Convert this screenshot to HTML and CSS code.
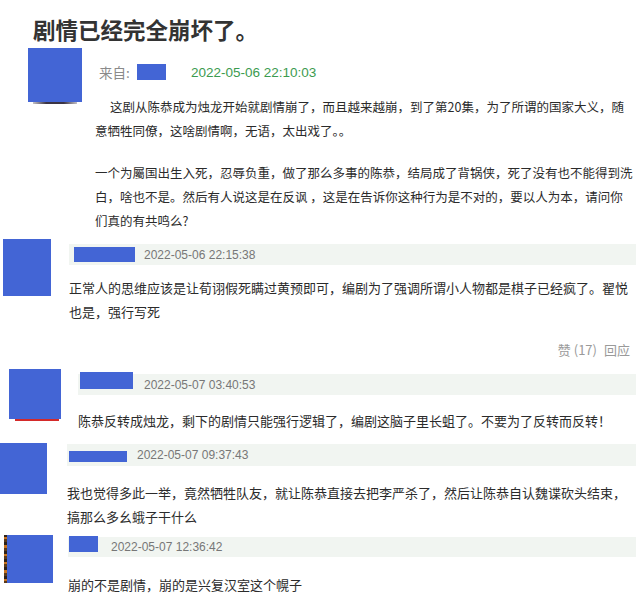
FILE: index.html
```html
<!DOCTYPE html>
<html lang="zh-CN">
<head>
<meta charset="utf-8">
<title>剧情已经完全崩坏了。</title>
<link rel="stylesheet" href="styles.css">
</head>
<body>
<div class="page">
  <h1 class="title">剧情已经完全崩坏了。</h1>

  <div class="main">
    <div class="main-side">
      <div class="main-av"></div>
      <div class="main-shadow"></div>
    </div>
    <div class="main-body">
      <div class="main-head">
        <span class="from">来自:</span>
        <span class="mask main-mask"></span>
        <span class="main-date">2022-05-06 22:10:03</span>
      </div>
      <p class="para first">这剧从陈恭成为烛龙开始就剧情崩了，而且越来越崩，到了第20集，为了所谓的国家大义，随意牺牲同僚，这啥剧情啊，无语，太出戏了。。</p>
      <p class="para second">一个为屬国出生入死，忍辱负重，做了那么多事的陈恭，结局成了背锅侠，死了没有也不能得到洗白，啥也不是。然后有人说这是在反讽 ，这是在告诉你这种行为是不对的，要以人为本，请问你们真的有共鸣么?</p>
    </div>
  </div>

  <div class="reply r2">
    <div class="side"><div class="av"></div></div>
    <div class="rb">
      <div class="bar"><span class="mask"></span><span class="date">2022-05-06 22:15:38</span></div>
      <p class="txt">正常人的思维应该是让荀诩假死瞒过黄预即可，编剧为了强调所谓小人物都是棋子已经疯了。翟悦也是，强行写死</p>
      <div class="acts"><span>赞 (17)</span><span>回应</span></div>
    </div>
  </div>

  <div class="reply r3">
    <div class="side"><div class="av"></div><div class="redline"></div></div>
    <div class="rb">
      <div class="bar"><span class="mask"></span><span class="date">2022-05-07 03:40:53</span></div>
      <p class="txt">陈恭反转成烛龙，剩下的剧情只能强行逻辑了，编剧这脑子里长蛆了。不要为了反转而反转！</p>
    </div>
  </div>

  <div class="reply r4">
    <div class="side"><div class="av"></div></div>
    <div class="rb">
      <div class="bar"><span class="mask"></span><span class="date">2022-05-07 09:37:43</span></div>
      <p class="txt">我也觉得多此一举，竟然牺牲队友，就让陈恭直接去把李严杀了，然后让陈恭自认魏谍砍头结束，搞那么多幺蛾子干什么</p>
    </div>
  </div>

  <div class="reply r5">
    <div class="side"><div class="av"></div></div>
    <div class="rb">
      <div class="bar"><span class="mask"></span><span class="date">2022-05-07 12:36:42</span></div>
      <p class="txt">崩的不是剧情，崩的是兴复汉室这个幌子</p>
    </div>
  </div>
</div>
</body>
</html>
```

FILE: styles.css
```css
html, body {
  margin: 0;
  padding: 0;
  background: #ffffff;
}

body {
  font-family: "Noto Sans CJK SC", "Noto Sans", sans-serif;
  color: #2b2b2b;
}

.page {
  width: 640px;
  height: 597px;
  overflow: hidden;
}

.title {
  margin: 0;
  height: 48px;
  box-sizing: border-box;
  padding: 14px 0 0 33px;
  font-size: 22.5px;
  line-height: 30px;
  font-weight: 700;
  color: #333333;
}

/* main comment */
.main {
  display: flex;
  align-items: flex-start;
  padding-left: 28px;
}

.main-side {
  flex: none;
  width: 54px;
}

.main-av {
  width: 54px;
  height: 54px;
  background: #4365d5;
}

.main-shadow {
  width: 44px;
  height: 2px;
  margin-left: 5px;
  background: linear-gradient(90deg, rgba(60,50,70,0.3), #3b3444 30%, #3b3444 70%, rgba(60,50,70,0.3));
}

.main-body {
  flex: none;
  width: 539px;
  margin-left: 13px;
}

.main-head {
  display: flex;
  align-items: center;
  margin-top: 14px;
  height: 20px;
  padding-left: 4px;
}

.from {
  flex: none;
  width: 38px;
  font-size: 13.5px;
  color: #8a8a8a;
}

.mask {
  flex: none;
  display: block;
  background: #4365d5;
}

.main-mask {
  width: 29px;
  height: 16px;
}

.main-date {
  margin-left: 25px;
  font-family: "Liberation Sans", Arial, sans-serif;
  font-size: 13.5px;
  color: #3c9b4f;
}

.para {
  margin: 0;
  font-size: 12.5px;
  line-height: 24px;
  color: #2b2b2b;
}

.para.first {
  margin-top: 13px;
  text-indent: 15px;
}

.para.second {
  margin-top: 18px;
}

/* replies */
.reply {
  display: flex;
  align-items: flex-start;
}

.side {
  flex: none;
}

.av {
  background: #4365d5;
}

.rb {
  flex: 1;
  min-width: 0;
  margin-right: 4px;
}

.bar {
  display: flex;
  align-items: center;
  background: #f1f5f1;
}

.bar .mask {
  align-self: flex-start;
}

.date {
  font-family: "Liberation Sans", Arial, sans-serif;
  font-size: 12px;
  color: #777777;
}

.txt {
  margin: 0;
  font-size: 13px;
  line-height: 24px;
  color: #2b2b2b;
}

.acts {
  display: flex;
  justify-content: flex-end;
  gap: 7px;
  margin-top: 16px;
  padding-right: 6px;
  font-size: 13px;
  line-height: 20px;
  color: #9a9a9a;
}

/* reply 2 */
.r2 { margin-top: 6px; }
.r2 .side { margin-left: 3px; }
.r2 .av { width: 48px; height: 57px; }
.r2 .rb { margin-left: 18px; margin-top: 5px; }
.r2 .bar { height: 21px; }
.r2 .mask { margin-left: 5px; margin-top: 3px; width: 61px; height: 15px; }
.r2 .date { margin-left: 9px; }
.r2 .txt { margin-top: 11px; }

/* reply 3 */
.r3 { margin-top: 9px; }
.r3 .side { margin-left: 9px; }
.r3 .av { width: 52px; height: 50px; }
.r3 .redline {
  width: 44px;
  height: 2px;
  margin-left: 6px;
  background: #d42a2a;
}
.r3 .rb { margin-left: 17px; margin-top: 5px; }
.r3 .bar { height: 21px; }
.r3 .mask { margin-left: 2px; margin-top: -2px; width: 53px; height: 17px; }
.r3 .date { margin-left: 11px; }
.r3 .txt { margin-top: 14px; }

/* reply 4 */
.r4 { margin-top: 10px; }
.r4 .av { width: 47px; height: 51px; }
.r4 .rb { margin-left: 20px; margin-top: 1px; }
.r4 .bar { height: 22px; }
.r4 .mask { margin-left: 2px; margin-top: 7px; width: 58px; height: 11px; }
.r4 .date { margin-left: 10px; }
.r4 .txt { margin-top: 15px; }

/* reply 5 */
.r5 { margin-top: 6px; }
.r5 .side { margin-left: 4px; }
.r5 .av {
  width: 46px;
  height: 48px;
  border-left: 3px solid #3a2a1c;
  border-image: repeating-linear-gradient(180deg, #2e2218 0 3px, #c9731f 3px 5px, #5a3a1a 5px 8px) 1;
}
.r5 .rb { margin-left: 15px; margin-top: 2px; }
.r5 .bar { height: 20px; }
.r5 .mask { margin-left: 1px; margin-top: -1px; width: 29px; height: 16px; }
.r5 .date { margin-left: 13px; }
.r5 .txt { margin-top: 16px; }
```
